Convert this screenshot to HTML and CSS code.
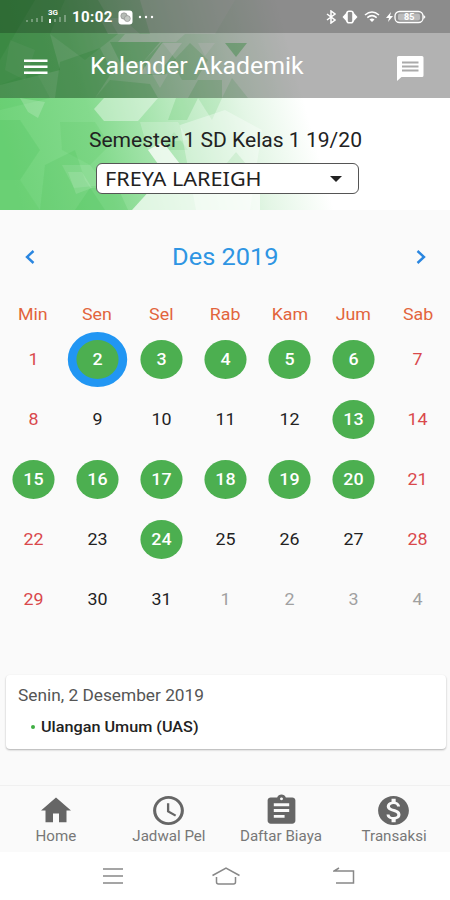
FILE: index.html
```
<!DOCTYPE html>
<html lang="id">
<head>
    <meta charset="UTF-8">
    <meta name="viewport" content="width=device-width, initial-scale=1.0">
    <title>Kalender Akademik</title>
    <link rel="stylesheet" href="styles.css">
</head>
<body>
    <header class="header">
        <svg class="header-bg" width="450" height="210" viewBox="0 0 450 210">
            <defs>
                <linearGradient id="fade" x1="0" y1="130" x2="290" y2="50" gradientUnits="userSpaceOnUse">
                    <stop offset="0" stop-color="#70d37a"/>
                    <stop offset="0.3" stop-color="#84da8d"/>
                    <stop offset="0.55" stop-color="#b4e8ba"/>
                    <stop offset="0.8" stop-color="#e4f6e6"/>
                    <stop offset="1" stop-color="#ffffff"/>
                </linearGradient>
            </defs>
            <rect width="450" height="210" fill="#fff"/>
            <rect width="450" height="210" fill="url(#fade)"/>
            <!-- darker facets -->
            <g fill="#3fbb4c">
                <polygon points="0,0 65,0 50,34 60,70 0,85" opacity=".4"/>
                <polygon points="0,0 35,0 15,34 0,60" opacity=".3"/>
                <polygon points="65,0 98,0 118,34 85,60 50,34" opacity=".25"/>
                <polygon points="0,85 35,70 50,98 0,110" opacity=".15"/>
                <polygon points="60,62 100,48 112,72 95,98 55,98" opacity=".3"/>
                <polygon points="110,42 160,42 143,62 120,62" opacity=".3"/>
                <polygon points="143,62 162,42 176,60 165,75 148,75" opacity=".25"/>
                <polygon points="95,98 110,80 150,84 158,98" opacity=".25"/>
                <polygon points="172,62 190,43 208,60 196,80 182,80" opacity=".2"/>
                <polygon points="188,98 198,80 222,80 222,98" opacity=".2"/>
                <polygon points="225,43 247,43 236,57" opacity=".4"/>
                <polygon points="222,98 232,78 248,98" opacity=".15"/>
                <polygon points="176,98 198,98 187,120 168,120" opacity=".2"/>
                <polygon points="198,98 222,98 212,120" opacity=".15"/>
                <polygon points="0,120 20,120 40,150 20,180 0,180" opacity=".18"/>
                <polygon points="0,180 20,180 40,210 0,210" opacity=".12"/>
                <polygon points="45,165 75,150 85,180 105,210 40,210" opacity=".16"/>
                <polygon points="60,122 95,122 110,145 90,165 62,150" opacity=".12"/>
                <polygon points="90,188 118,188 128,210 75,210" opacity=".18"/>
                <polygon points="226,164 236,152 246,164" opacity=".2"/>
                <polygon points="160,150 174,132 188,150" opacity=".14"/>
            </g>
            <!-- lighter facets -->
            <g fill="#fff">
                <polygon points="104,98 158,98 138,121 104,121 94,109" opacity=".4"/>
                <polygon points="100,18 122,18 140,34 108,34" opacity=".25"/>
                <polygon points="125,34 185,34 176,42 118,42" opacity=".4"/>
                <polygon points="162,43 182,43 158,74 140,74" opacity=".5"/>
                <polygon points="140,0 235,0 215,34 150,34" opacity=".35"/>
                <polygon points="198,43 215,43 205,56" opacity=".4"/>
                <polygon points="152,74 168,74 160,88" opacity=".3"/>
                <polygon points="148,150 163,142 180,164 158,164" opacity=".75"/>
                <polygon points="140,122 178,122 188,140 165,142 148,150" opacity=".2"/>
                <polygon points="180,125 225,110 262,130 250,210 196,210" opacity=".35"/>
                <polygon points="132,210 152,188 260,188 260,210" opacity=".7"/>
                <polygon points="62,165 90,165 105,185 74,188" opacity=".1"/>
                <polygon points="20,98 45,102 38,118 28,112" opacity=".18"/>
                <polygon points="68,172 82,172 92,188 76,194" opacity=".12"/>
                <polygon points="10,40 35,50 25,80 5,70" opacity=".07"/>
            </g>
        </svg>
        <div class="statusbar">
            <div class="status-left">
                <svg width="46" height="18" viewBox="0 0 46 18" fill="#fff">
                    <g opacity=".3">
                        <rect x="1" y="12" width="2" height="2"/>
                        <rect x="6" y="11" width="2" height="3"/>
                        <rect x="11" y="10" width="2" height="4"/>
                        <rect x="16" y="8" width="2" height="6"/>
                        <rect x="29" y="11" width="2" height="3"/>
                        <rect x="34" y="9" width="2" height="5"/>
                        <rect x="39" y="7" width="2" height="7"/>
                    </g>
                    <rect x="24" y="11" width="2" height="4"/>
                    <text class="network" x="23" y="7">3G</text>
                </svg>
                <span class="clock">10:02</span>
                <svg width="15" height="15" viewBox="0 0 15 15">
                    <rect x=".5" y=".5" width="14" height="14" rx="3" fill="#fff"/>
                    <circle cx="6" cy="6" r="3.2" fill="#b4bab4" stroke="#888" stroke-width=".6"/>
                    <circle cx="9.3" cy="8.6" r="3" fill="#c4c9c4" stroke="#888" stroke-width=".6"/>
                </svg>
                <svg width="16" height="4" viewBox="0 0 16 4" fill="#fff">
                    <circle cx="2" cy="2" r="1.2"/>
                    <circle cx="8" cy="2" r="1.2"/>
                    <circle cx="14" cy="2" r="1.2"/>
                </svg>
            </div>
            <div class="status-right">
                <svg width="10" height="14" viewBox="0 0 10 14" fill="none" stroke="#fff" stroke-width="1.5">
                    <path d="M1 4l8 6-4 3V1l4 3-8 6"/>
                </svg>
                <svg width="16" height="14" viewBox="0 0 16 14" fill="#fff">
                    <path d="M5 2v10L.5 7zM11 2v10l4.500-5z"/>
                    <rect x="5" y="1.200" width="6" height="11.600" rx="2" fill="none" stroke="#fff" stroke-width="1.600"/>
                </svg>
                <svg width="16" height="12" viewBox="0 0 16 12" fill="none" stroke="#fff" stroke-width="1.500">
                    <path d="M1 4q7-6 14 0M3.300 6.600q4.700-4 9.400 0"/>
                    <path d="M5.500 8.500q2.500-2 5 0L8 11z" fill="#fff" stroke="none"/>
                </svg>
                <svg width="40" height="14" viewBox="0 0 40 14">
                    <path d="M5 2L0 8h3l-1 4 5-6H4z" fill="#fff"/>
                    <rect x="9" y="1.500" width="28" height="11" rx="4.500" fill="none" stroke="#fff" stroke-width="1.300"/>
                    <rect x="12" y="3.500" width="22" height="7" rx="2" fill="#fff" opacity=".4"/>
                    <path d="M37.500 4.500l2 2.500-2 2.500z" fill="#fff"/>
                    <text class="battery" x="18" y="10">85</text>
                </svg>
            </div>
        </div>
        <div class="appbar">
            <svg class="menu-icon" width="24" height="16" viewBox="0 0 24 16" fill="#fff">
                <rect y="0.500" width="23.500" height="2.500"/>
                <rect y="6.500" width="23.500" height="2.500"/>
                <rect y="12.500" width="23.500" height="2.500"/>
            </svg>
            <h1 class="title"><span class="wide from-left">Kalender Akademik</span></h1>
            <svg class="chat-icon" width="28" height="26" viewBox="0 0 28 26">
                <path d="M2.500 0h23.500q1.500 0 1.500 1.500v18q0 1.500-1.500 1.500H5.500L1 25V1.500q0-1.500 1.500-1.500z" fill="#fff"/>
                <path d="M6 6.500h16.500M6 10.500h16.500M6 14.500h16.500" stroke="#aaa" stroke-width="1.800"/>
            </svg>
        </div>
        <div class="student">
            <div class="semester"><span class="wide">Semester 1 SD Kelas 1 19/20</span></div>
            <div class="select">
                <span class="wide from-left">FREYA LAREIGH</span>
                <svg width="12" height="6" viewBox="0 0 12 6"><path d="M0 0h12L6 6z" fill="#222"/></svg>
            </div>
        </div>
    </header>

    <main class="content">
        <div class="month">
            <svg width="10" height="14" viewBox="0 0 10 14"><path d="M8.500 1L2 7l6.500 6"/></svg>
            <span class="month-name wide">Des 2019</span>
            <svg width="10" height="14" viewBox="0 0 10 14"><path d="M1.500 1L8 7l-6.500 6"/></svg>
        </div>
        <div class="weekdays">
            <span class="wide">Min</span>
            <span class="wide">Sen</span>
            <span class="wide">Sel</span>
            <span class="wide">Rab</span>
            <span class="wide">Kam</span>
            <span class="wide">Jum</span>
            <span class="wide">Sab</span>
        </div>
        <div class="days">
            <span class="day red">1</span>
            <span class="day event selected">2</span>
            <span class="day event">3</span>
            <span class="day event">4</span>
            <span class="day event">5</span>
            <span class="day event">6</span>
            <span class="day red">7</span>
            <span class="day red">8</span>
            <span class="day">9</span>
            <span class="day">10</span>
            <span class="day">11</span>
            <span class="day">12</span>
            <span class="day event">13</span>
            <span class="day red">14</span>
            <span class="day event">15</span>
            <span class="day event">16</span>
            <span class="day event">17</span>
            <span class="day event">18</span>
            <span class="day event">19</span>
            <span class="day event">20</span>
            <span class="day red">21</span>
            <span class="day red">22</span>
            <span class="day">23</span>
            <span class="day event">24</span>
            <span class="day">25</span>
            <span class="day">26</span>
            <span class="day">27</span>
            <span class="day red">28</span>
            <span class="day red">29</span>
            <span class="day">30</span>
            <span class="day">31</span>
            <span class="day other">1</span>
            <span class="day other">2</span>
            <span class="day other">3</span>
            <span class="day other">4</span>
        </div>
        <div class="card">
            <div class="card-date"><span class="wide from-left">Senin, 2 Desember 2019</span></div>
            <div class="card-event"><i class="dot"></i><span class="wide from-left">Ulangan Umum (UAS)</span></div>
        </div>
    </main>

    <nav class="tabs">
        <a class="tab">
            <svg width="36" height="35" viewBox="0 0 24 24" preserveAspectRatio="none"><path d="M10 20v-6h4v6h5v-8h3L12 3 2 12h3v8z"/></svg>
            <span class="wide">Home</span>
        </a>
        <a class="tab">
            <svg width="37" height="35" viewBox="0 0 24 24" preserveAspectRatio="none"><path d="M11.990 2C6.470 2 2 6.480 2 12s4.470 10 9.990 10C17.520 22 22 17.520 22 12S17.520 2 11.990 2zM12 20c-4.420 0-8-3.580-8-8s3.580-8 8-8 8 3.580 8 8-3.580 8-8 8zm.5-13H11v6l5.250 3.150.75-1.230-4.500-2.670z"/></svg>
            <span class="wide">Jadwal Pel</span>
        </a>
        <a class="tab">
            <svg width="37" height="35" viewBox="0 0 24 24" preserveAspectRatio="none"><path d="M19 3h-4.180C14.400 1.840 13.300 1 12 1c-1.300 0-2.400.84-2.820 2H5c-1.100 0-2 .9-2 2v14c0 1.100.9 2 2 2h14c1.100 0 2-.9 2-2V5c0-1.100-.9-2-2-2zm-7 0c.55 0 1 .45 1 1s-.45 1-1 1-1-.45-1-1 .45-1 1-1zm2 14H7v-2h7v2zm3-4H7v-2h10v2zm0-4H7V7h10v2z"/></svg>
            <span class="wide">Daftar Biaya</span>
        </a>
        <a class="tab">
            <svg width="37" height="35" viewBox="0 0 24 24" preserveAspectRatio="none"><path d="M12 2C6.480 2 2 6.480 2 12s4.480 10 10 10 10-4.480 10-10S17.520 2 12 2zm1.410 16.090V20h-2.670v-1.930c-1.710-.36-3.160-1.460-3.270-3.400h1.960c.1 1.050.82 1.870 2.650 1.870 1.960 0 2.400-.98 2.400-1.590 0-.83-.44-1.610-2.670-2.140-2.480-.6-4.180-1.620-4.180-3.670 0-1.720 1.390-2.840 3.110-3.210V4h2.670v1.950c1.860.45 2.790 1.860 2.850 3.390H14.300c-.05-1.110-.64-1.870-2.220-1.870-1.500 0-2.400.68-2.400 1.640 0 .84.65 1.390 2.670 1.910s4.180 1.390 4.180 3.910c-.01 1.830-1.380 2.830-3.120 3.160z"/></svg>
            <span class="wide">Transaksi</span>
        </a>
    </nav>

    <footer class="sysbar">
        <svg width="22" height="18" viewBox="0 0 22 18"><path d="M1 2h20M1 9h20M1 16h20"/></svg>
        <svg width="30" height="20" viewBox="0 0 30 20"><path d="M1.500 9.500L15 2l13.500 7.500M5.500 11v5q0 2 2 2h15q2 0 2-2v-5"/></svg>
        <svg class="back" width="22" height="18" viewBox="0 0 22 18"><path d="M6 1L1 4h19.500v12H3"/></svg>
    </footer>
</body>
</html>
```

FILE: styles.css
```
body {
    margin: 0;
    width: 450px;
    height: 900px;
    display: flex;
    flex-direction: column;
    overflow: hidden;
    background: #fafafa;
    font-family: Roboto, sans-serif;
    color: #222;
}

svg {
    display: block;
    flex: none;
}

/* slightly extended lettering */
.wide {
    display: inline-block;
    transform: scaleX(1.08);
    white-space: nowrap;
}

.from-left {
    transform-origin: left;
}

.header {
    position: relative;
    height: 210px;
    flex: none;
}

.header-bg {
    position: absolute;
    top: 0;
    left: 0;
    z-index: -1;
}

.statusbar {
    height: 33px;
    box-sizing: border-box;
    padding: 1px 24px 0 25px;
    display: flex;
    align-items: center;
    justify-content: space-between;
    background: rgba(0, 0, 0, 0.45);
}

.status-left,
.status-right {
    display: flex;
    align-items: center;
}

.status-left {
    gap: 5px;
}

.status-left svg:first-child {
    margin-right: -4px;
}

.status-right {
    gap: 6px;
}

.network {
    font-size: 8px;
    font-weight: 700;
}

.clock {
    width: 41px;
    font-size: 15px;
    font-weight: 700;
    letter-spacing: 0.4px;
    color: #fff;
}

.battery {
    font-size: 9px;
    font-weight: 700;
    fill: #fff;
}

.appbar {
    height: 65px;
    box-sizing: border-box;
    padding: 2px 26px 0 24px;
    display: flex;
    align-items: center;
    background: rgba(0, 0, 0, 0.3);
}

.title {
    flex: 1;
    margin: 0 0 0 42px;
    font-size: 23px;
    font-weight: 400;
    color: #fff;
}

.chat-icon {
    margin-top: 4px;
}

.student {
    display: flex;
    flex-direction: column;
    align-items: center;
    padding-top: 31px;
}

.semester {
    height: 24px;
    line-height: 24px;
    font-size: 19.5px;
}

.select {
    width: 263px;
    height: 31px;
    box-sizing: border-box;
    margin: 10px 0 0 4px;
    padding: 0 16px 0 8px;
    display: flex;
    align-items: center;
    justify-content: space-between;
    border: 1px solid #555;
    border-radius: 6px;
    background: #fff;
    font-family: "Noto Sans", sans-serif;
    font-size: 20px;
}

.content {
    flex: 1;
}

.month {
    height: 94px;
    box-sizing: border-box;
    padding: 0 24px 0 25px;
    display: flex;
    align-items: center;
    justify-content: space-between;
}

.month path {
    fill: none;
    stroke: #2a86e0;
    stroke-width: 2.4;
}

.month-name {
    font-size: 23.5px;
    color: #2e95e3;
}

.weekdays,
.days {
    display: grid;
    grid-template-columns: repeat(7, 1fr);
    justify-items: center;
    align-items: center;
    padding-left: 1px;
}

.weekdays {
    height: 20px;
    font-size: 16.5px;
    color: #e2643c;
}

.days {
    margin-top: 5px;
    grid-auto-rows: 60px;
    font-size: 16.5px;
}

.day {
    width: 39px;
    height: 39px;
    line-height: 39px;
    border-radius: 50%;
    text-align: center;
    transform: scaleX(1.08);
}

.red {
    color: #d9484b;
}

.other {
    color: #a0a0a0;
}

.event {
    background: #4caf50;
    color: #fff;
    font-weight: 500;
}

.selected {
    border: 8px solid #2196f3;
}

.card {
    height: 74px;
    box-sizing: border-box;
    margin: 46px 4px 0 6px;
    padding: 11px 12px;
    border-radius: 4px;
    background: #fff;
    box-shadow: 0 1px 2px rgba(0, 0, 0, 0.3);
}

.card-date {
    height: 20px;
    line-height: 20px;
    font-size: 16px;
    color: #555;
}

.card-event {
    height: 20px;
    margin-top: 11px;
    padding-left: 13px;
    display: flex;
    align-items: center;
    gap: 6px;
    font-size: 15px;
    font-weight: 500;
}

.dot {
    width: 4px;
    height: 4px;
    border-radius: 50%;
    background: #3fae43;
}

.tabs {
    height: 67px;
    box-sizing: border-box;
    flex: none;
    display: flex;
    border-top: 1px solid #f0f0f0;
}

.tab {
    flex: 1;
    display: flex;
    flex-direction: column;
    align-items: center;
    justify-content: flex-end;
    padding-bottom: 8px;
    font-size: 14px;
    line-height: 16px;
    color: #777;
}

.tab path {
    fill: #666;
}

.sysbar {
    height: 48px;
    box-sizing: border-box;
    flex: none;
    display: flex;
    align-items: center;
    padding-left: 102px;
    gap: 87px;
    background: #fff;
}

.sysbar path {
    fill: none;
    stroke: #888;
    stroke-width: 1.5;
}

.back {
    margin-left: 5px;
}
```
